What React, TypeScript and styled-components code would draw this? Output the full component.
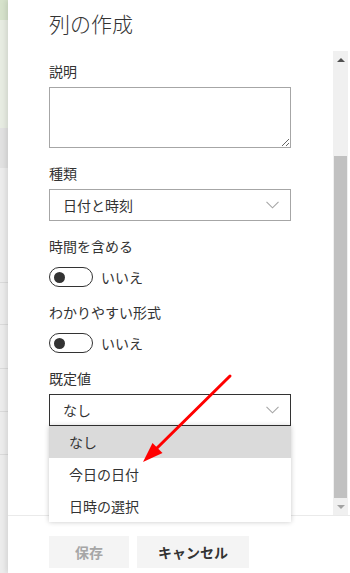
import React from "react"
import styled, { createGlobalStyle } from "styled-components"

const GlobalStyle = createGlobalStyle`
  html, body {
    margin: 0;
    padding: 0;
  }
  body {
    width: 350px;
    height: 573px;
    overflow: hidden;
    background: #fff;
    color: #333;
    font-family: "Noto Sans CJK JP", "Noto Sans", sans-serif;
  }
`

const Screen = styled.div`
  position: relative;
  display: flex;
  width: 350px;
  height: 573px;
  overflow: hidden;
`

const Backdrop = styled.div`
  width: 8px;
  flex-shrink: 0;
  display: flex;
  flex-direction: column;
`

const Band = styled.div<{ $h?: number; $bg: string; $line?: boolean }>`
  box-sizing: border-box;
  height: ${(p) => (p.$h ? `${p.$h}px` : "auto")};
  flex: ${(p) => (p.$h ? "none" : "1")};
  background: ${(p) => p.$bg};
  border-bottom: ${(p) => (p.$line ? "1px solid #dadada" : "none")};
`

const Panel = styled.div`
  position: relative;
  z-index: 1;
  flex: 1;
  display: flex;
  flex-direction: column;
  background: #fff;
  box-shadow: -2px 0 5px rgba(0, 0, 0, 0.1);
`

const Header = styled.div`
  height: 51px;
  box-sizing: border-box;
  padding: 8px 0 0 41px;
`

const Title = styled.h1`
  margin: 0;
  font-size: 21px;
  font-weight: 300;
  line-height: 30px;
  color: #333;
`

const Body = styled.div`
  display: flex;
  height: 464px;
  padding-right: 2px;
`

const Content = styled.div`
  position: relative;
  flex: 1;
  padding: 10px 0 0 41px;
`

const Field = styled.div`
  margin-bottom: 15px;
`

const Label = styled.div`
  font-size: 14px;
  line-height: 20px;
  margin-bottom: 6px;
  color: #333;
`

const TextArea = styled.textarea`
  display: block;
  box-sizing: border-box;
  width: 242px;
  height: 61px;
  margin: 0;
  border: 1px solid #a6a6a6;
  border-radius: 0;
  resize: vertical;
  font-family: inherit;
  font-size: 14px;
  outline: none;
`

const SelectWrap = styled.div`
  position: relative;
  width: 242px;
`

const SelectBox = styled.div<{ $open?: boolean }>`
  box-sizing: border-box;
  display: flex;
  align-items: center;
  justify-content: space-between;
  height: 32px;
  padding: 0 11px 0 13px;
  border: 1px solid ${(p) => (p.$open ? "#333" : "#a6a6a6")};
  font-size: 14px;
  color: #333;
`

const Chevron = () => (
  <svg width="13" height="8" viewBox="0 0 13 8">
    <path d="M0.5 0.8 L6.5 6.8 L12.5 0.8" fill="none" stroke="#a6a6a6" strokeWidth="1.1" />
  </svg>
)

const Menu = styled.ul`
  position: absolute;
  z-index: 5;
  top: 100%;
  left: 0;
  width: 242px;
  margin: 0;
  padding: 0;
  list-style: none;
  background: #fff;
  box-shadow: 0 0 5px rgba(0, 0, 0, 0.22);
`

const MenuItem = styled.li<{ $active?: boolean }>`
  height: 32px;
  line-height: 32px;
  padding-left: 20px;
  font-size: 14px;
  color: #333;
  background: ${(p) => (p.$active ? "#dadada" : "#fff")};
`

const ToggleRow = styled.div`
  display: flex;
  align-items: center;
  gap: 8px;
  padding-top: 5px;
  font-size: 14px;
  color: #333;
`

const Switch = styled.div`
  box-sizing: border-box;
  display: flex;
  align-items: center;
  width: 44px;
  height: 20px;
  padding: 0 4px;
  border: 1px solid #333;
  border-radius: 10px;
`

const Knob = styled.div`
  width: 11px;
  height: 11px;
  border-radius: 50%;
  background: #333;
`

const ScrollBar = styled.div`
  width: 15px;
  display: flex;
  flex-direction: column;
  background: #f0f0f0;
`

const ScrollArrow = styled.div<{ $down?: boolean }>`
  height: 17px;
  display: flex;
  align-items: center;
  justify-content: center;
  &::before {
    content: "";
    border-left: 4px solid transparent;
    border-right: 4px solid transparent;
    ${(p) =>
      p.$down
        ? "border-top: 4px solid #a3a3a3;"
        : "border-bottom: 4px solid #505050;"}
  }
`

const Track = styled.div`
  flex: 1;
  display: flex;
  flex-direction: column;
  padding: 88px 1px 0;
`

const Thumb = styled.div`
  flex: 1;
  background: #c1c1c1;
`

const Footer = styled.div`
  flex: 1;
  display: flex;
  gap: 8px;
  padding: 20px 0 0 41px;
  border-top: 1px solid #eaeaea;
`

const Button = styled.button<{ $w: number; $disabled?: boolean }>`
  width: ${(p) => p.$w}px;
  height: 32px;
  border: none;
  background: #f4f4f4;
  font-family: inherit;
  font-size: 14px;
  font-weight: 700;
  color: ${(p) => (p.$disabled ? "#a6a6a6" : "#333")};
`

const Overlay = styled.svg`
  position: absolute;
  inset: 0;
  z-index: 10;
  pointer-events: none;
`

export default function App() {
  return (
    <>
      <GlobalStyle />
      <Screen>
        <Backdrop>
          <Band $h={20} $bg="#d6e2cb" />
          <Band $h={108} $bg="#e7ece2" />
          <Band $h={40} $bg="#e1e1e1" />
          <Band $h={115} $bg="#ececec" $line />
          <Band $h={42} $bg="#ececec" $line />
          <Band $h={44} $bg="#ececec" $line />
          <Band $h={43} $bg="#ececec" $line />
          <Band $h={43} $bg="#ececec" $line />
          <Band $bg="#ececec" />
        </Backdrop>
        <Panel>
          <Header>
            <Title>列の作成</Title>
          </Header>
          <Body>
            <Content>
              <Field>
                <Label>説明</Label>
                <TextArea />
              </Field>
              <Field>
                <Label>種類</Label>
                <SelectWrap>
                  <SelectBox>
                    <span>日付と時刻</span>
                    <Chevron />
                  </SelectBox>
                </SelectWrap>
              </Field>
              <Field>
                <Label>時間を含める</Label>
                <ToggleRow>
                  <Switch>
                    <Knob />
                  </Switch>
                  いいえ
                </ToggleRow>
              </Field>
              <Field>
                <Label>わかりやすい形式</Label>
                <ToggleRow>
                  <Switch>
                    <Knob />
                  </Switch>
                  いいえ
                </ToggleRow>
              </Field>
              <Field>
                <Label>既定値</Label>
                <SelectWrap>
                  <SelectBox $open>
                    <span>なし</span>
                    <Chevron />
                  </SelectBox>
                  <Menu>
                    <MenuItem $active>なし</MenuItem>
                    <MenuItem>今日の日付</MenuItem>
                    <MenuItem>日時の選択</MenuItem>
                  </Menu>
                </SelectWrap>
              </Field>
            </Content>
            <ScrollBar>
              <ScrollArrow />
              <Track>
                <Thumb />
              </Track>
              <ScrollArrow $down />
            </ScrollBar>
          </Body>
          <Footer>
            <Button $w={80} $disabled>
              保存
            </Button>
            <Button $w={112}>キャンセル</Button>
          </Footer>
        </Panel>
        <Overlay width="350" height="573" viewBox="0 0 350 573">
          <line x1="230" y1="376" x2="155" y2="450" stroke="#f00" strokeWidth="3" strokeLinecap="round" />
          <polygon points="143,462 162.5,453 152.5,443" fill="#f00" />
        </Overlay>
      </Screen>
    </>
  )
}
